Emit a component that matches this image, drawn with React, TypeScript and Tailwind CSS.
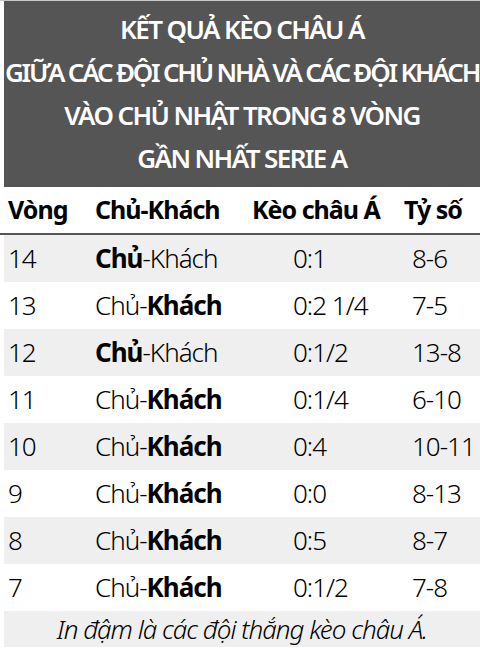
const rows: { vong: string; home: boolean; keo: string; score: string }[] = [
  { vong: '14', home: true, keo: '0:1', score: '8-6' },
  { vong: '13', home: false, keo: '0:2 1/4', score: '7-5' },
  { vong: '12', home: true, keo: '0:1/2', score: '13-8' },
  { vong: '11', home: false, keo: '0:1/4', score: '6-10' },
  { vong: '10', home: false, keo: '0:4', score: '10-11' },
  { vong: '9', home: false, keo: '0:0', score: '8-13' },
  { vong: '8', home: false, keo: '0:5', score: '8-7' },
  { vong: '7', home: false, keo: '0:1/2', score: '7-8' },
];

const font = { fontFamily: '"Noto Sans", "Open Sans", sans-serif' };

export default function App() {
  return (
    <div className="h-[648px] w-[480px] overflow-hidden bg-white text-black" style={font}>
      <div className="h-px bg-[#c8c8c8]" />
      {/* Title */}
      <div className="ml-1 flex h-[186px] flex-col items-center justify-center bg-[#555555] text-[26px] leading-[43px] font-semibold tracking-[-1.6px] text-white">
        <div>KẾT QUẢ KÈO CHÂU Á</div>
        <div className="tracking-[-2.2px]">GIỮA CÁC ĐỘI CHỦ NHÀ VÀ CÁC ĐỘI KHÁCH</div>
        <div>VÀO CHỦ NHẬT TRONG 8 VÒNG</div>
        <div>GẦN NHẤT SERIE A</div>
      </div>

      {/* Table head */}
      <div className="flex h-[48px] items-center border-b-2 border-[#555555] pl-2 text-[25px] font-bold tracking-[-1px]">
        <div className="w-[87px]">Vòng</div>
        <div className="w-[157px]">Chủ-Khách</div>
        <div className="w-[152px]">Kèo châu Á</div>
        <div>Tỷ số</div>
      </div>

      {/* Rows */}
      {rows.map((r, i) => (
        <div
          key={r.vong}
          className={`ml-1 flex h-[47px] items-center pl-1 text-[26px] font-light tracking-[-1px] ${i % 2 === 0 ? 'bg-[#efefef]' : ''}`}
        >
          <div className="w-[87px]">{r.vong}</div>
          <div className="w-[198px]">
            {r.home ? (
              <>
                <span className="font-bold">Chủ</span>-Khách
              </>
            ) : (
              <>
                Chủ-<span className="font-bold">Khách</span>
              </>
            )}
          </div>
          <div className="w-[119px]">{r.keo}</div>
          <div>{r.score}</div>
        </div>
      ))}

      {/* Footnote */}
      <div className="ml-1 flex h-[36px] items-center justify-center bg-[#efefef] text-[26px] font-light italic tracking-[-1px]">
        In đậm là các đội thắng kèo châu Á.
      </div>
    </div>
  );
}
